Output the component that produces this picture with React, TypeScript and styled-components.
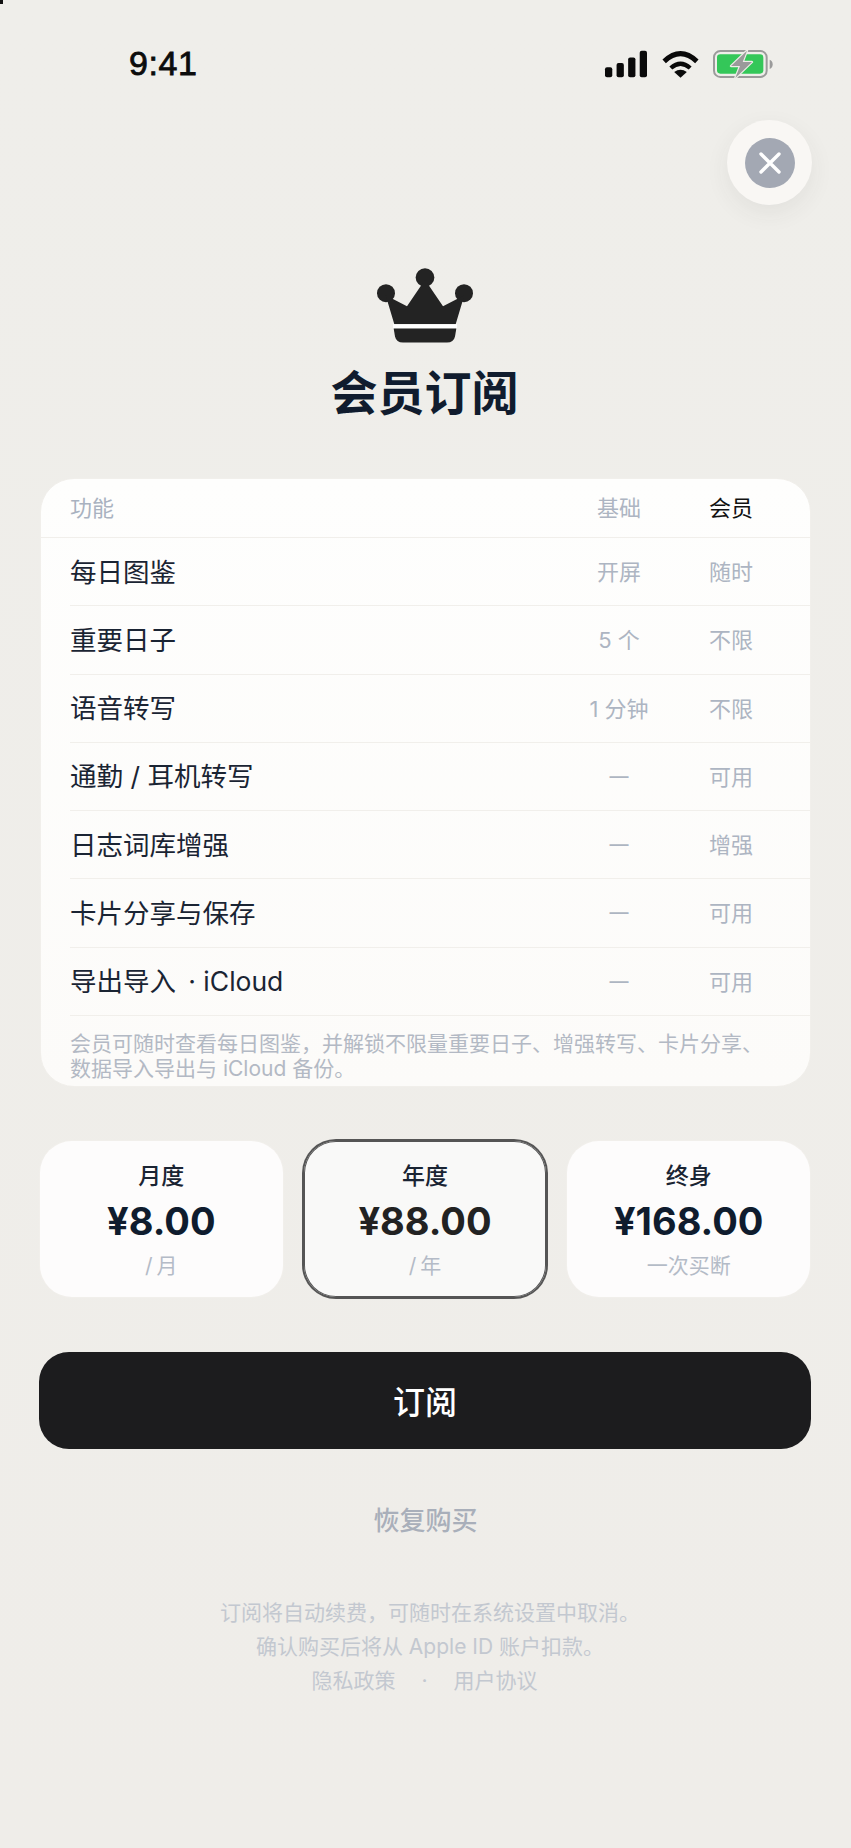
import styled, { createGlobalStyle } from 'styled-components';

const GlobalStyle = createGlobalStyle`
  html, body { margin: 0; padding: 0; background: #efede9; }
  * { box-sizing: border-box; }
`;

const Page = styled.div`
  position: relative;
  width: 851px;
  height: 1848px;
  overflow: hidden;
  background: linear-gradient(180deg, #efeeea 0%, #efede9 100%);
  font-family: Inter, "Noto Sans CJK SC", sans-serif;
`;

const CornerMark = styled.i`
  position: absolute;
  top: 0;
  left: 0;
  width: 3px;
  height: 4px;
  background: #111;
`;

const StatusBar = styled.div`
  height: 120px;
  padding: 47px 78px 0 129px;
  display: flex;
  justify-content: space-between;
  align-items: flex-start;
`;

const Clock = styled.span`
  font-family: "Liberation Sans", Arial, sans-serif;
  font-size: 34px;
  line-height: 33px;
  font-weight: 400;
  letter-spacing: 0.6px;
  -webkit-text-stroke: 0.8px #0c0c0c;
  color: #0c0c0c;
`;

const StatusIcons = styled.div`
  display: flex;
  align-items: center;
  margin-top: 3px;
  gap: 14px;
`;

const CloseRow = styled.div`
  display: flex;
  justify-content: flex-end;
  padding-right: 39px;
`;

const CloseOuter = styled.button`
  width: 85px;
  height: 85px;
  padding: 0;
  border: 0;
  border-radius: 50%;
  background: #f9f7f4;
  box-shadow: 0 8px 24px rgba(60, 55, 50, 0.07);
  display: flex;
  align-items: center;
  justify-content: center;
`;

const CloseInner = styled.span`
  width: 50px;
  height: 50px;
  border-radius: 50%;
  background: #a3a8b3;
  display: flex;
  align-items: center;
  justify-content: center;
`;

const Hero = styled.div`
  margin-top: 63px;
  padding-right: 2px;
  display: flex;
  flex-direction: column;
  align-items: center;
`;

const Title = styled.h1`
  margin: 20px 0 0;
  font-size: 47px;
  line-height: 60px;
  font-weight: 700;
  color: #101c2e;
`;

const Card = styled.section`
  margin: 55px 40px 0;
  height: 609px;
  border: 1px solid #f1efeb;
  border-radius: 34px;
  background: linear-gradient(180deg, #fefefd 0%, #fcfbf9 100%);
  overflow: hidden;
`;

const HeaderRow = styled.div`
  height: 59px;
  padding: 0 27px 5px 29px;
  display: grid;
  grid-template-columns: 1fr 120px 104px;
  align-items: center;
  border-bottom: 1px solid #f1efeb;
  font-size: 22px;
  color: #a9b2c0;
`;

const Row = styled.div`
  height: 68.25px;
  margin-left: 29px;
  padding: 0 27px 3px 0;
  display: grid;
  grid-template-columns: 1fr 120px 104px;
  align-items: center;
  border-bottom: 1px solid #f1efeb;
`;

const Feature = styled.span`
  font-size: 26.5px;
  color: #1a2433;
`;

const Cell = styled.span<{ $dark?: boolean; $dash?: boolean }>`
  text-align: center;
  font-size: ${(p) => (p.$dash ? '19px' : '22px')};
  font-weight: ${(p) => (p.$dash ? 500 : 400)};
  padding-top: ${(p) => (p.$dash ? '3px' : '0')};
  color: ${(p) => (p.$dark ? '#111' : '#adb5c2')};
`;

const Note = styled.p`
  margin: 0;
  padding: 15px 40px 0 29px;
  font-size: 21px;
  line-height: 25px;
  color: #b3b9c4;
`;

const Plans = styled.div`
  margin: 54px 41px 0 40px;
  display: grid;
  grid-template-columns: repeat(3, 1fr);
  gap: 21px;
`;

const Plan = styled.div<{ $selected?: boolean }>`
  height: 156px;
  border-radius: 32px;
  background: ${(p) => (p.$selected ? '#f9f9f8' : '#fdfcfc')};
  box-shadow: ${(p) => (p.$selected ? '0 0 0 2px #555, inset 0 0 0 1px #555' : '0 0 0 1px #f1efeb')};
  display: flex;
  flex-direction: column;
  align-items: center;
  padding-top: 18px;
`;

const PlanName = styled.span`
  font-size: 23px;
  line-height: 34px;
  font-weight: 500;
  color: #1a2433;
`;

const Price = styled.span<{ $selected?: boolean }>`
  margin-top: 2px;
  font-size: 38px;
  line-height: 52px;
  font-weight: 700;
  color: ${(p) => (p.$selected ? '#222' : '#0f1c2e')};
`;

const PlanSub = styled.span`
  margin-top: 3px;
  font-size: 21px;
  line-height: 32px;
  word-spacing: -2px;
  color: #b4bbc7;
`;

const SubscribeButton = styled.button`
  display: block;
  width: 772px;
  height: 97px;
  margin: 55px 0 0 39px;
  padding: 0 0 2px;
  border: 0;
  border-radius: 30px;
  background: #1c1c1e;
  color: #fff;
  font-family: inherit;
  font-size: 32px;
  font-weight: 500;
`;

const Restore = styled.div`
  margin-top: 52px;
  text-align: center;
  font-size: 26px;
  line-height: 40px;
  font-weight: 500;
  color: #a9afba;
`;

const Footer = styled.div`
  margin-top: 55px;
  text-align: center;
  font-size: 21px;
  line-height: 34px;
  color: #c3c8d0;
`;

const FooterLine = styled.div`
  padding-left: 9px;
`;

const Links = styled.div`
  display: flex;
  justify-content: center;
  gap: 26px;
  padding-right: 2px;
`;

const features = [
  ['每日图鉴', '开屏', '随时'],
  ['重要日子', '5 个', '不限'],
  ['语音转写', '1 分钟', '不限'],
  ['通勤 / 耳机转写', '—', '可用'],
  ['日志词库增强', '—', '增强'],
  ['卡片分享与保存', '—', '可用'],
  ['导出导入 \u2009· iCloud', '—', '可用'],
];

const plans = [
  { name: '月度', price: '¥8.00', sub: '/ 月' },
  { name: '年度', price: '¥88.00', sub: '/ 年', selected: true },
  { name: '终身', price: '¥168.00', sub: '一次买断' },
];

const SignalIcon = () => (
  <svg width="44" height="28" viewBox="130 58 133 84">
    <rect x="133" y="110" width="22" height="30" rx="6" fill="#0a0a0a" />
    <rect x="168" y="97" width="22" height="43" rx="6" fill="#0a0a0a" />
    <rect x="203" y="80" width="22" height="60" rx="6" fill="#0a0a0a" />
    <rect x="238" y="60" width="22" height="80" rx="6" fill="#0a0a0a" />
  </svg>
);

const WifiIcon = () => (
  <svg width="37" height="28" viewBox="305 58 110 84">
    <path d="M311 92 Q360 46 409 92" fill="none" stroke="#0a0a0a" strokeWidth="15" />
    <path d="M331 112 Q360 86 389 112" fill="none" stroke="#0a0a0a" strokeWidth="13" />
    <path d="M341 124 Q360 110 379 124 L360 141 Z" fill="#0a0a0a" />
  </svg>
);

const BatteryIcon = () => (
  <svg width="60" height="28" viewBox="460 58 180 84">
    <rect x="463" y="61" width="158" height="78" rx="19" fill="none" stroke="#9b9b9b" strokeWidth="6" />
    <rect x="472" y="71" width="139" height="58" rx="10" fill="#34c759" />
    <path d="M630 87 Q639 90 639 101 Q639 112 630 115 Z" fill="#9b9b9b" />
    <path d="M562 60 L514 106 L541 106 L527 142 L577 94 L549 94 Z" fill="#9a9a9a" stroke="#eeece8" strokeWidth="7" strokeLinejoin="round" paintOrder="stroke" />
  </svg>
);

const CloseIcon = () => (
  <svg width="22" height="22" viewBox="0 0 22 22">
    <path d="M2 2 L20 20 M20 2 L2 20" stroke="#fff" strokeWidth="3.4" strokeLinecap="round" />
  </svg>
);

const CrownIcon = () => (
  <svg width="96" height="75" viewBox="232 57 288 224">
    <circle cx="376" cy="85" r="28" fill="#232323" />
    <circle cx="259" cy="132" r="27" fill="#232323" />
    <circle cx="493" cy="132" r="27" fill="#232323" />
    <path d="M284 225 L258 138 L322 171 L376 92 L430 171 L494 138 L468 225 Z" fill="#232323" />
    <rect x="280" y="225" width="192" height="13" fill="#fff" />
    <path d="M282 238 L470 238 L466 262 Q462 280 442 280 L310 280 Q290 280 286 262 Z" fill="#232323" />
  </svg>
);

export default function App() {
  return (
    <Page>
      <GlobalStyle />
      <CornerMark />
      <StatusBar>
        <Clock>9:41</Clock>
        <StatusIcons>
          <SignalIcon />
          <WifiIcon />
          <BatteryIcon />
        </StatusIcons>
      </StatusBar>
      <CloseRow>
        <CloseOuter aria-label="关闭">
          <CloseInner>
            <CloseIcon />
          </CloseInner>
        </CloseOuter>
      </CloseRow>
      <Hero>
        <CrownIcon />
        <Title>会员订阅</Title>
      </Hero>
      <Card>
        <HeaderRow>
          <span>功能</span>
          <Cell>基础</Cell>
          <Cell $dark>会员</Cell>
        </HeaderRow>
        {features.map(([name, basic, member]) => (
          <Row key={name}>
            <Feature>{name}</Feature>
            <Cell $dash={basic === '—'}>{basic}</Cell>
            <Cell>{member}</Cell>
          </Row>
        ))}
        <Note>会员可随时查看每日图鉴，并解锁不限量重要日子、增强转写、卡片分享、数据导入导出与 iCloud 备份。</Note>
      </Card>
      <Plans>
        {plans.map((plan) => (
          <Plan key={plan.name} $selected={plan.selected}>
            <PlanName>{plan.name}</PlanName>
            <Price $selected={plan.selected}>{plan.price}</Price>
            <PlanSub>{plan.sub}</PlanSub>
          </Plan>
        ))}
      </Plans>
      <SubscribeButton>订阅</SubscribeButton>
      <Restore>恢复购买</Restore>
      <Footer>
        <FooterLine>订阅将自动续费，可随时在系统设置中取消。</FooterLine>
        <FooterLine>确认购买后将从 Apple ID 账户扣款。</FooterLine>
        <Links>
          <span>隐私政策</span>
          <span>·</span>
          <span>用户协议</span>
        </Links>
      </Footer>
    </Page>
  );
}
